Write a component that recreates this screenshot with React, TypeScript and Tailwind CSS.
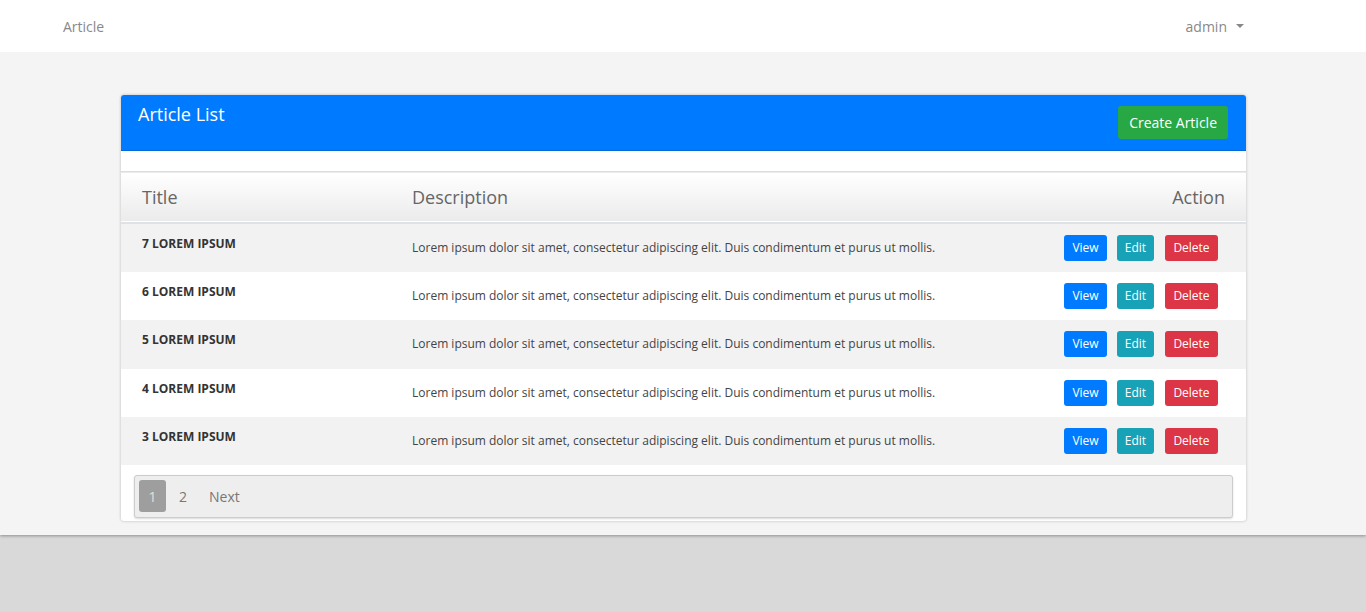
import React from 'react'

const rows = ['7 LOREM IPSUM', '6 LOREM IPSUM', '5 LOREM IPSUM', '4 LOREM IPSUM', '3 LOREM IPSUM']
const desc = 'Lorem ipsum dolor sit amet, consectetur adipiscing elit. Duis condimentum et purus ut mollis.'

export default function App() {
  return (
    <div className="min-h-[612px] bg-[#d9d9d9] font-['Open_Sans',sans-serif]">
      <div className="h-[535px] bg-[#f4f4f4] shadow-[0_1px_3px_rgba(0,0,0,0.35)]">
        {/* navbar */}
        <nav className="flex h-[52px] items-center justify-between bg-white pl-[63px] pr-[122px] text-[14px] text-[#888]">
          <span>Article</span>
          <span className="flex items-center">
            admin
            <span className="ml-[9px] inline-block border-x-[4px] border-t-[4px] border-x-transparent border-t-[#888]" />
          </span>
        </nav>

        {/* card */}
        <div className="ml-[121px] mr-[120px] mt-[43px] overflow-hidden rounded-[3px] bg-white shadow-[0_0_3px_rgba(0,0,0,0.25)]">
          <div className="flex h-[56px] items-start justify-between border-b border-[#0069d9] bg-[#007bff] pl-[17px] pr-[18px]">
            <h2 className="pt-[6px] text-[18px] text-white">Article List</h2>
            <button className="mt-[11px] h-[33px] rounded-[3px] bg-[#28a745] px-[11px] text-[14px] text-white">
              Create Article
            </button>
          </div>

          <div className="h-[20px]" />

          <table className="w-full table-fixed border-collapse">
            <colgroup>
              <col className="w-[281px]" />
              <col className="w-[561px]" />
              <col />
            </colgroup>
            <thead>
              <tr className="h-[51px] border-t border-b-2 border-t-[#ddd] border-b-[#dee2e6] bg-gradient-to-b from-white to-[#ebebeb] text-[18px] text-[#666]">
                <th className="pl-[21px] pt-[1px] text-left font-normal">Title</th>
                <th className="pl-[10px] pt-[1px] text-left font-normal">Description</th>
                <th className="pr-[21px] pt-[1px] text-right font-normal">Action</th>
              </tr>
            </thead>
            <tbody>
              {rows.map((t, i) => (
                <tr key={t} className={`${i === 0 || i === 2 ? 'h-[49px]' : 'h-[48px]'} ${i % 2 === 0 ? 'bg-[#f2f2f2]' : 'bg-white'}`}>
                  <td className="pl-[21px] pt-[11px] align-top text-[12px] font-bold text-[#333]">{t}</td>
                  <td className="pl-[10px] align-middle text-[12px] text-[#444]">{desc}</td>
                  <td className="pr-[28px] align-middle">
                    <div className="flex justify-end text-[12px] text-white">
                      <button className="h-[26px] w-[43px] rounded-[3px] bg-[#007bff]">View</button>
                      <button className="ml-[10px] h-[26px] w-[37px] rounded-[3px] bg-[#17a2b8]">Edit</button>
                      <button className="ml-[11px] h-[26px] w-[53px] rounded-[3px] bg-[#dc3545]">Delete</button>
                    </div>
                  </td>
                </tr>
              ))}
            </tbody>
          </table>

          <div className="px-[13px] pb-[3px] pt-[10px]">
            <div className="flex h-[43px] items-center rounded-[3px] border border-[#ccc] bg-[#eee] px-[4px] text-[14px] text-[#777] shadow-[0_1px_2px_rgba(0,0,0,0.15)]">
              <span className="flex h-[32px] w-[27px] items-center justify-center rounded-[3px] bg-[#9e9e9e] text-[#e0e0e0]">1</span>
              <span className="ml-[13px]">2</span>
              <span className="ml-[22px]">Next</span>
            </div>
          </div>
        </div>
      </div>
    </div>
  )
}
